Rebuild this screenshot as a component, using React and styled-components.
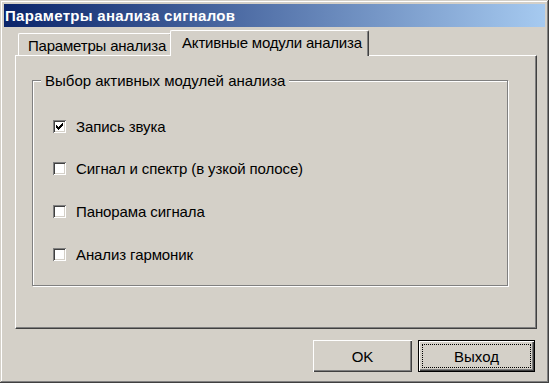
import React from 'react';
import styled, { createGlobalStyle } from 'styled-components';

const GlobalStyle = createGlobalStyle`
  html, body {
    margin: 0;
    padding: 0;
    background: #d4d0c8;
  }
  body {
    font-family: "Liberation Sans", Arial, sans-serif;
    font-size: 15px;
    color: #000;
  }
`;

const Window = styled.div`
  width: 549px;
  height: 383px;
  box-sizing: border-box;
  padding: 4px;
  background: #d4d0c8;
  box-shadow: inset -1px -1px #404040, inset 1px 1px #d4d0c8,
    inset -2px -2px #808080, inset 2px 2px #fff;
  display: flex;
  flex-direction: column;
`;

const TitleBar = styled.div`
  height: 23px;
  flex-shrink: 0;
  display: flex;
  align-items: center;
  padding-left: 1px;
  background: linear-gradient(to right, #0a246a, #a6caf0);
  color: #fff;
  font-weight: bold;
  font-size: 15px;
  letter-spacing: 0.3px;
`;

const Body = styled.div`
  display: flex;
  flex-direction: column;
  padding: 3px 8px 0 11px;
`;

const TabStrip = styled.div`
  display: flex;
  align-items: flex-end;
  height: 25px;
  padding-left: 3px;
`;

const Tab = styled.div`
  position: relative;
  box-sizing: border-box;
  display: flex;
  align-items: center;
  height: ${p => (p.$active ? '26px' : '22px')};
  margin: ${p => (p.$active ? '0 -2px -1px -2px' : '0')};
  padding: ${p => (p.$active ? '0 6px 2px 11px' : '1px 5px 0 9px')};
  z-index: ${p => (p.$active ? 1 : 0)};
  background: #d4d0c8;
  border-left: 1px solid #fff;
  border-top: 1px solid #fff;
  border-right: 1px solid #404040;
  border-radius: 2px 2px 0 0;
  box-shadow: inset -1px 0 #808080;
  white-space: nowrap;
  letter-spacing: -0.2px;
`;

const Panel = styled.div`
  box-sizing: border-box;
  height: 274px;
  padding: 16px 0 0 16px;
  border-left: 1px solid #fff;
  border-top: 1px solid #fff;
  border-right: 1px solid #404040;
  border-bottom: 1px solid #404040;
  box-shadow: inset -1px -1px #808080;
`;

const GroupBox = styled.fieldset`
  box-sizing: border-box;
  width: 476px;
  height: 214px;
  margin: 0;
  padding: 27px 0 0 0;
  border: 1px solid #808080;
  box-shadow: inset 1px 1px #fff, 1px 1px #fff;
  display: flex;
  flex-direction: column;
  gap: 22.7px;
`;

const Legend = styled.legend`
  margin-left: 8px;
  padding: 0 4px;
  background: #d4d0c8;
`;

const Row = styled.label`
  display: flex;
  align-items: center;
  gap: 10px;
  height: 20px;
  padding-left: 20px;
  letter-spacing: -0.1px;
`;

const Box = styled.span`
  width: 13px;
  height: 13px;
  flex-shrink: 0;
  box-sizing: border-box;
  background: #fff;
  box-shadow: inset 1px 1px #808080, inset -1px -1px #fff,
    inset 2px 2px #404040, inset -2px -2px #d4d0c8;
  display: flex;
  align-items: center;
  justify-content: center;
`;

const ButtonRow = styled.div`
  display: flex;
  justify-content: flex-end;
  gap: 6px;
  margin-top: 11px;
  padding-right: 2px;
`;

const Button = styled.button`
  box-sizing: border-box;
  width: ${p => p.$width}px;
  height: 32px;
  padding: 3px;
  font-family: inherit;
  font-size: 15px;
  color: #000;
  background: #d4d0c8;
  border: ${p => (p.$default ? '1px solid #000' : 'none')};
  box-shadow: inset 1px 1px #fff, inset -1px -1px #404040,
    inset -2px -2px #808080;
  display: flex;
  align-items: center;
  justify-content: center;
`;

const Focus = styled.span`
  flex: 1;
  align-self: stretch;
  display: flex;
  align-items: center;
  justify-content: center;
  outline: 1px dotted #000;
  outline-offset: -1px;
`;

const Check = () => (
  <svg width="7" height="7" viewBox="0 0 7 7" shapeRendering="crispEdges">
    <path
      fill="#000"
      d="M6 0h1v3h-1zM5 1h1v3h-1zM4 2h1v3h-1zM0 2h1v3h-1zM1 3h1v3h-1zM2 4h1v3h-1zM3 3h1v3h-1z"
    />
  </svg>
);

const modules = [
  { name: 'Запись звука', on: true },
  { name: 'Сигнал и спектр (в узкой полосе)', on: false },
  { name: 'Панорама сигнала', on: false },
  { name: 'Анализ гармоник', on: false },
];

export default function App() {
  return (
    <>
      <GlobalStyle />
      <Window>
        <TitleBar>Параметры анализа сигналов</TitleBar>
        <Body>
          <TabStrip>
            <Tab>Параметры анализа</Tab>
            <Tab $active>Активные модули анализа</Tab>
          </TabStrip>
          <Panel>
            <GroupBox>
              <Legend>Выбор активных модулей анализа</Legend>
              {modules.map(m => (
                <Row key={m.name}>
                  <Box>{m.on && <Check />}</Box>
                  {m.name}
                </Row>
              ))}
            </GroupBox>
          </Panel>
          <ButtonRow>
            <Button $width={99}>OK</Button>
            <Button $width={117} $default>
              <Focus>Выход</Focus>
            </Button>
          </ButtonRow>
        </Body>
      </Window>
    </>
  );
}
